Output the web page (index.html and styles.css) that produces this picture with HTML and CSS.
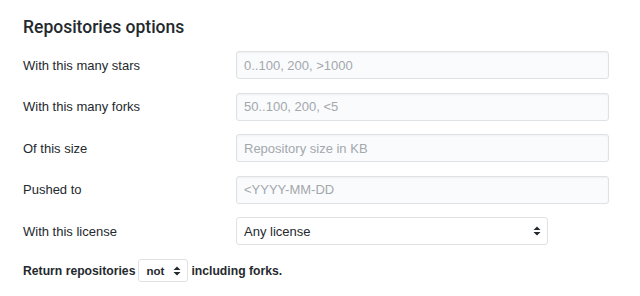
FILE: index.html
```html
<!DOCTYPE html>
<html lang="en">
<head>
  <meta charset="UTF-8">
  <meta name="viewport" content="width=device-width, initial-scale=1.0">
  <title>Repositories options</title>
  <link rel="stylesheet" href="styles.css">
</head>
<body>
  <div class="container">
    <h3>Repositories options</h3>

    <div class="rows">
      <div class="row">
        <label for="stars">With this many stars</label>
        <input type="text" class="field" id="stars" placeholder="0..100, 200, >1000">
      </div>
      <div class="row">
        <label for="forks">With this many forks</label>
        <input type="text" class="field" id="forks" placeholder="50..100, 200, <5">
      </div>
      <div class="row">
        <label for="size">Of this size</label>
        <input type="text" class="field" id="size" placeholder="Repository size in KB">
      </div>
      <div class="row">
        <label for="pushed">Pushed to</label>
        <input type="text" class="field" id="pushed" placeholder="<YYYY-MM-DD">
      </div>
      <div class="row">
        <label for="license">With this license</label>
        <div class="select license">
          <span>Any license</span>
          <svg width="8" height="10" viewBox="0 0 8 10"><path d="M4 0.5 L7.5 4 L0.5 4 Z M0.5 6 L7.5 6 L4 9.5 Z" fill="#24292e"/></svg>
        </div>
      </div>
    </div>

    <p class="forks">
      Return repositories
      <span class="select small">
        <span>not</span>
        <svg width="8" height="10" viewBox="0 0 8 10"><path d="M4 0.5 L7.5 4 L0.5 4 Z M0.5 6 L7.5 6 L4 9.5 Z" fill="#24292e"/></svg>
      </span>
      including forks.
    </p>
  </div>
</body>
</html>
```

FILE: styles.css
```css
body {
  margin: 0;
  font-family: "Liberation Sans", Arial, sans-serif;
  color: #24292e;
  background: #fff;
}

.container {
  padding: 0 31px 0 23px;
}

.container > h3 {
  margin: 0;
  padding-top: 15px;
  font-family: Roboto, "Liberation Sans", sans-serif;
  font-size: 17.5px;
  font-weight: 500;
  line-height: 24px;
}

.rows {
  display: flex;
  flex-direction: column;
  gap: 13.5px;
  margin-top: 12px;
}

.row {
  display: flex;
  align-items: center;
  height: 28px;
}

.row > label {
  width: 213px;
  font-size: 13px;
}

.field {
  flex: 1;
  box-sizing: border-box;
  height: 28px;
  padding: 0 7px;
  font-family: inherit;
  font-size: 13px;
  color: #24292e;
  background-color: #fafbfc;
  border: 1px solid #dfe2e5;
  border-radius: 3px;
  box-shadow: inset 0 1px 2px rgba(27, 31, 35, 0.05);
  outline: none;
}

.field::placeholder {
  color: #a3a8ad;
}

.select {
  display: flex;
  align-items: center;
  justify-content: space-between;
  box-sizing: border-box;
  background-color: #fff;
  border: 1px solid #dfe2e5;
  border-radius: 3px;
}

.license {
  width: 312px;
  height: 28px;
  padding: 0 6px 0 7px;
  font-size: 13px;
}

.forks {
  display: flex;
  align-items: center;
  margin: 14px 0 0;
  font-size: 12.2px;
  font-weight: bold;
}

.small {
  width: 50px;
  height: 23px;
  margin: 0 3px;
  padding: 0 6px 0 7px;
  font-size: 11.5px;
}
```
